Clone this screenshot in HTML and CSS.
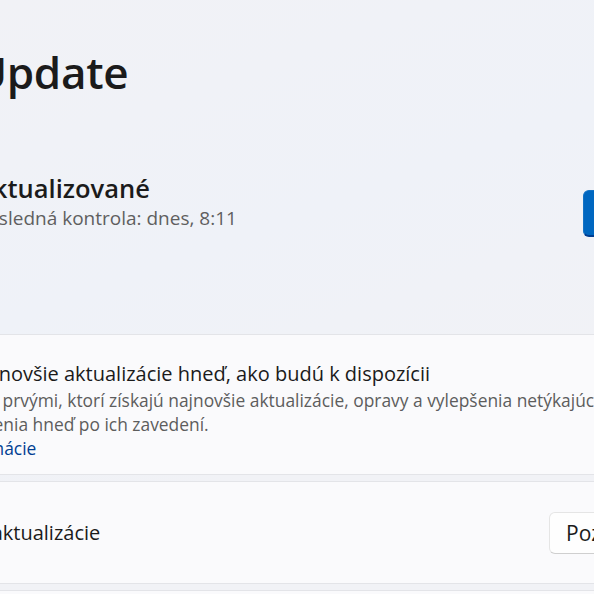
FILE: index.html
```html
<!DOCTYPE html>
<html lang="sk">
<head>
<meta charset="utf-8">
<title>Windows Update</title>
<link rel="stylesheet" href="styles.css">
</head>
<body>
<main class="content">
  <h1 class="title">Windows Update</h1>
  <section class="status">
    <div class="status-icon">
      <svg viewBox="0 0 96 96" width="110" height="110" aria-hidden="true">
        <path d="M48 14a34 34 0 1 1-30 18" fill="none" stroke="#0067c0" stroke-width="7" stroke-linecap="round"/>
        <circle cx="70" cy="70" r="18" fill="#0f7b0f"/>
        <path d="M62 70l6 6 11-12" fill="none" stroke="#fff" stroke-width="4" stroke-linecap="round" stroke-linejoin="round"/>
      </svg>
    </div>
    <div class="status-text">
      <div class="status-title">Aktualizované</div>
      <div class="status-sub">Posledná kontrola: dnes, 8:11</div>
    </div>
    <button class="btn btn-primary">Vyhľadať aktualizácie</button>
  </section>
  <div class="cards">
    <div class="card card-tall">
      <div class="card-icon">
        <svg viewBox="0 0 24 24" width="30" height="30" aria-hidden="true"><path d="M12 3v4M12 17v4M3 12h4M17 12h4" stroke="#1b1b1b" stroke-width="1.5" fill="none"/></svg>
      </div>
      <div class="card-body">
        <div class="card-title">Získajte najnovšie aktualizácie hneď, ako budú k dispozícii</div>
        <div class="card-desc">Buďte medzi prvými, ktorí získajú najnovšie aktualizácie, opravy a vylepšenia netýkajúce<br>sa zabezpečenia hneď po ich zavedení.</div>
        <a class="card-link" href="#">Ďalšie informácie</a>
      </div>
    </div>
    <div class="card card-pause">
      <div class="card-icon">
        <svg viewBox="0 0 24 24" width="30" height="30" aria-hidden="true"><path d="M9 5v14M15 5v14" stroke="#1b1b1b" stroke-width="1.5" fill="none"/></svg>
      </div>
      <div class="card-body">
        <div class="card-title">Pozastaviť aktualizácie</div>
      </div>
      <button class="btn btn-secondary">Pozastaviť na 1 týždeň</button>
    </div>
    <div class="card">
      <div class="card-body">
        <div class="card-title">História aktualizácií</div>
      </div>
    </div>
  </div>
</main>
</body>
</html>
```

FILE: styles.css
```css
html, body {
  margin: 0;
  padding: 0;
}
body {
  width: 594px;
  height: 594px;
  overflow: hidden;
  background: linear-gradient(160deg, #f1f2f6 0%, #eff2f8 40%, #f1f2f6 70%);
  font-family: "Open Sans", "Noto Sans", sans-serif;
  color: #1b1b1b;
}
.content {
  margin-left: -187px;
  width: 1012px;
  padding-top: 47px;
}
.title {
  margin: 0 0 0 -41px;
  font-size: 44px;
  font-weight: 600;
  line-height: 50px;
  letter-spacing: -0.3px;
}
.status {
  display: flex;
  align-items: center;
  margin-top: 61px;
  height: 110px;
}
.status-icon {
  width: 110px;
  height: 110px;
  margin-right: 53px;
}
.status-text {
  flex: 1;
  margin-bottom: 22px;
}
.status-title {
  font-size: 25.5px;
  font-weight: 600;
  line-height: 32px;
}
.status-sub {
  font-size: 19px;
  line-height: 28px;
  color: #5f5f5f;
}
.btn {
  font-family: inherit;
  font-size: 19px;
  border-radius: 6px;
  height: 47px;
  padding: 0 18px;
  white-space: nowrap;
  overflow: hidden;
}
.btn-primary {
  width: 242px;
  background: #0067c0;
  color: #fff;
  border: 1px solid #1473c5;
  border-bottom: 2px solid #003e92;
}
.cards {
  margin-top: 66px;
  display: flex;
  flex-direction: column;
  gap: 6px;
}
.card {
  display: flex;
  align-items: center;
  background: #fafafc;
  border: 1.5px solid #e3e4e8;
  border-radius: 6px;
  padding: 0 24px;
  height: 100px;
}
.card-tall {
  height: 139px;
  align-items: flex-start;
}
.card-pause {
  height: 101px;
}
.card-icon {
  width: 30px;
  margin-right: 24px;
  flex: none;
}
.card-tall .card-icon {
  margin-top: 26px;
}
.card-body {
  flex: 1;
}
.card-tall .card-body {
  padding-top: 25px;
}
.card-title {
  font-size: 20px;
  line-height: 28px;
}
.card-tall .card-title {
  margin-left: 2px;
}
.card-desc {
  font-size: 17.4px;
  line-height: 24px;
  color: #5d5d5d;
  margin-left: 4px;
}
.card-link {
  display: inline-block;
  font-size: 17.4px;
  line-height: 24px;
  color: #003e92;
  text-decoration: none;
  margin-left: 4px;
}
.btn-secondary {
  width: 251px;
  height: 42px;
  font-size: 21px;
  text-align: left;
  padding: 0 16px;
  background: #fefefe;
  color: #1b1b1b;
  border: 1px solid #e5e5e5;
  border-bottom-color: #cfcfcf;
}
```
